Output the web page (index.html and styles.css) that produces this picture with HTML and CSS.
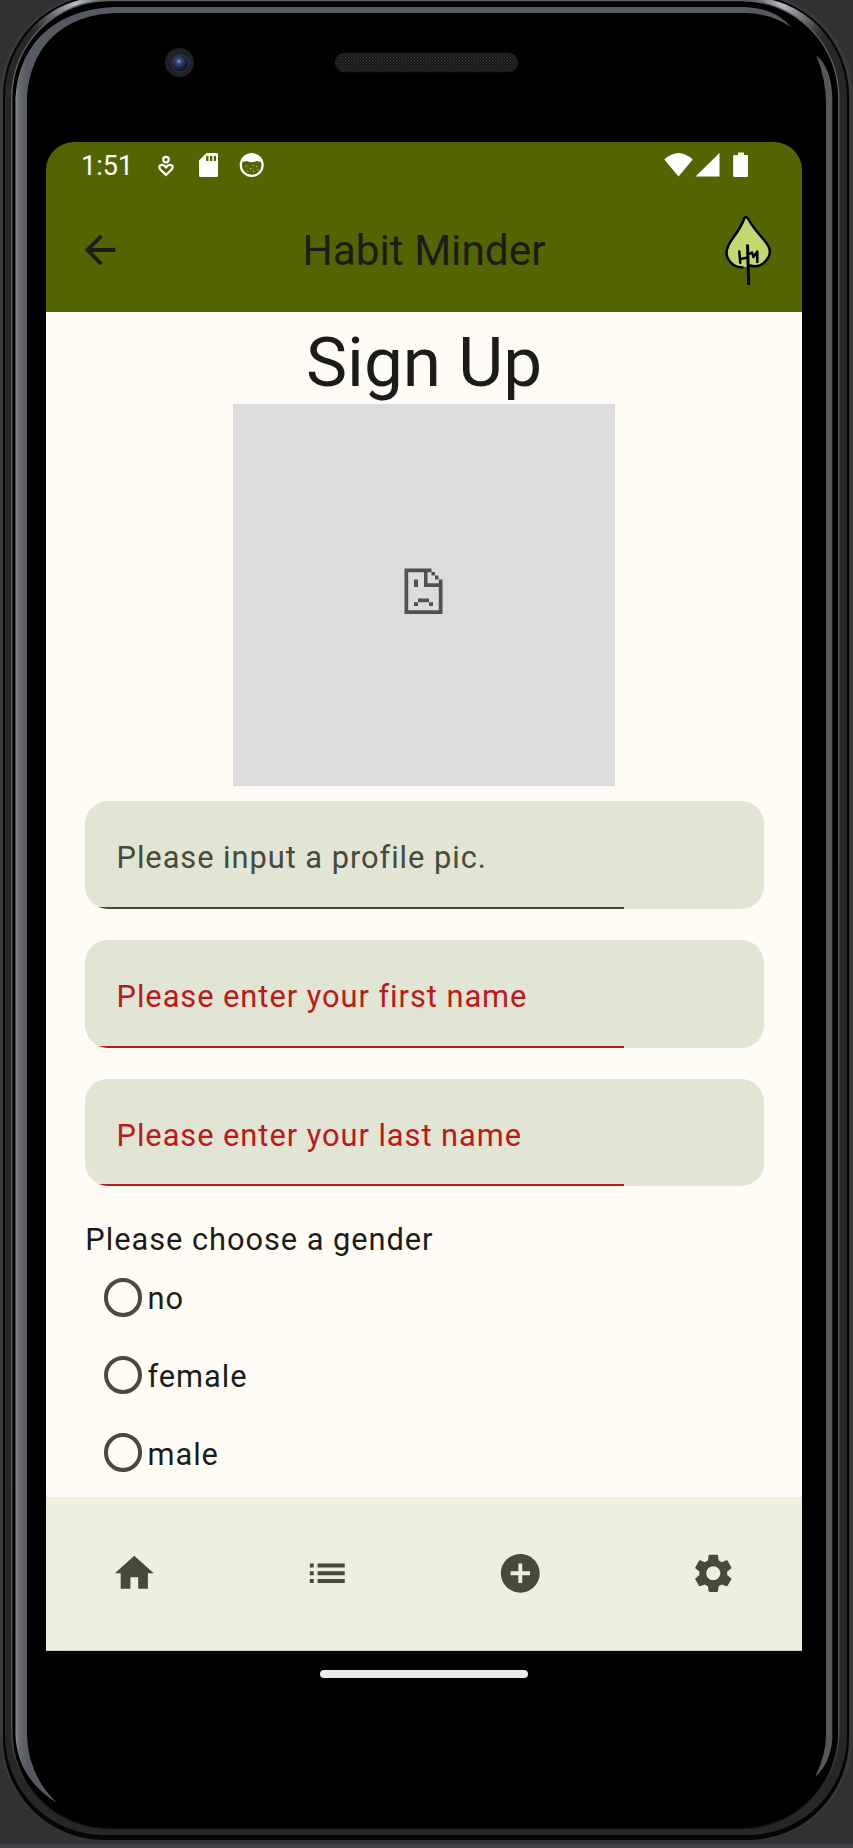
FILE: index.html
```html
<!DOCTYPE html>
<html lang="en">
<head>
<meta charset="utf-8">
<title>Habit Minder</title>
<link rel="stylesheet" href="styles.css">
</head>
<body>
<div class="stage">
  <svg class="device" viewBox="0 0 853 1848" aria-hidden="true">
    <defs>
      <linearGradient id="rail" gradientUnits="userSpaceOnUse" x1="15.5" x2="27" y1="0" y2="0"><stop offset="0" stop-color="#8b8d93"/><stop offset=".3" stop-color="#686b72"/><stop offset="1" stop-color="#565a62"/></linearGradient>
      <linearGradient id="ring" x1="0" y1="0" x2="0" y2="1"><stop offset="0" stop-color="#626365"/><stop offset=".94" stop-color="#5a5b5d"/><stop offset=".985" stop-color="#1c1c1c"/><stop offset="1" stop-color="#111"/></linearGradient>
      <radialGradient id="glintL" gradientUnits="userSpaceOnUse" cx="76" cy="4" r="58"><stop offset="0" stop-color="#b8bcc1"/><stop offset=".5" stop-color="#62656a"/><stop offset="1" stop-color="#333" stop-opacity="0"/></radialGradient>
      <radialGradient id="glintR" gradientUnits="userSpaceOnUse" cx="783" cy="4" r="58"><stop offset="0" stop-color="#b8bcc1"/><stop offset=".5" stop-color="#62656a"/><stop offset="1" stop-color="#333" stop-opacity="0"/></radialGradient>
      <radialGradient id="lens" cx=".42" cy=".38" r=".6"><stop offset="0" stop-color="#8fa5d8"/><stop offset=".25" stop-color="#35477f"/><stop offset=".7" stop-color="#18203f"/><stop offset="1" stop-color="#10131c"/></radialGradient>
      <pattern id="mesh" width="3" height="3" patternUnits="userSpaceOnUse"><rect width="3" height="3" fill="#171918"/><path d="M0 0h1v1H0zM1.500 1.500h1v1H1.500z" fill="#3c3f3e"/></pattern>
    </defs>
    <rect x="0" y="-7" width="853" height="1847" rx="103" fill="#3b3839"/>
    <rect x="3" y="-5" width="846" height="1845" rx="101" fill="#050505"/>
    <rect x="5" y="-3" width="842" height="1838" rx="99" fill="#272727"/>
    <path d="M5 110V96A99 99 0 0 1 104-3H130V1H110A98 94 0 0 0 12 95V110z" fill="url(#glintL)"/>
    <path d="M847 110V96A99 99 0 0 0 748-3H722V1H741A98 94 0 0 1 839 95V110z" fill="url(#glintR)"/>
    <rect x="11.8" y=".5" width="827" height="1828" rx="97" fill="#000" stroke="url(#ring)" stroke-width="1.3"/>
    <path d="M15.500 1735V105C15.500 45 55 7 120 7H745Q775 8 791 27Q770 13 745 13H120C62 13 27 48 27 105V1735Q28 1775 57 1803Q17 1778 15.500 1735z" fill="url(#rail)"/>
    <path d="M816 55Q832 68 832.3 100V1740Q830 1764 815 1777Q826 1755 826 1735V105Q826 78 816 55z" fill="#57585e"/>
    <circle cx="179.5" cy="62.5" r="14.5" fill="#202122"/>
    <circle cx="180.3" cy="63.5" r="8.6" fill="url(#lens)" stroke="#353b49" stroke-width="1"/>
    <rect x="335.5" y="53.5" width="182" height="18" rx="9" fill="url(#mesh)" stroke="#1c1d1d" stroke-width="1.5"/>
  </svg>

  <main class="screen">
    <header class="top">
      <div class="status">
        <span class="clock">1:51</span>
        <svg class="s-heart" viewBox="157 150 18 28"><g fill="none" stroke="#fff" stroke-width="2.200"><circle cx="166" cy="158.600" r="2.800"/><path d="M166 174L160.400 168.500Q158.300 165.800 160.400 164.200Q163.500 162.700 166 166.300Q168.500 162.700 171.600 164.200Q173.700 165.800 171.600 168.500z"/></g></svg>
        <svg class="s-card" viewBox="199 153 19 24"><path fill="#fff" fill-rule="evenodd" d="M206.500 153H216.500Q218 153 218 154.500V175.500Q218 177 216.500 177H200.500Q199 177 199 175.500V160.500zM206.200 156V161H208.500V156zM210 156V161H212.300V156zM213.800 156V161H216V156z"/></svg>
        <svg class="s-face" viewBox="239 152 26 26"><circle cx="251.700" cy="165" r="10.900" fill="#536500" stroke="#fff" stroke-width="2.200"/><path d="M242.500 162L243.500 157.500L247 155H256L260 157.500L261 162L256.800 161Q251.800 163.500 246.800 161z" fill="#fff"/><path d="M245.500 166h1.300M250 168.500h1.300M256 166.500h1.300M253 171.500h1.300M247 171h1.300M257.500 170h1.300M252.500 165.500h1.300" stroke="#c3cc96" stroke-width="1.200"/></svg>
        <svg class="s-right" viewBox="664 152 86 26"><path fill="#fff" d="M664.300 159.500Q678.500 146.500 692.700 159.500L678.500 176.500zM695.500 176.500L719.500 153V176.500zM738 152.500H744V155H746.700Q748 155 748 156.300V175.700Q748 177 746.700 177H734.500Q733.200 177 733.200 175.700V156.300Q733.200 155 734.500 155H738z"/></svg>
      </div>
      <div class="appbar">
        <svg class="back" viewBox="0 0 24 24"><path fill="#1b1c17" d="M20 11H7.830l5.590-5.590L12 4l-8 8 8 8 1.410-1.410L7.830 13H20z"/></svg>
        <h1 class="app-title">Habit Minder</h1>
        <svg class="leaf" viewBox="722 212 52 76"><path d="M745.500 217C742 225 739 230 733 238C727 246 725 252 727.500 257.500C731 264 737 267 746 267C757 267 764 264 768 258C772 251 769 246 764 240C757 232 752 226 748.500 219.500Q746.500 215.500 745.500 217z" fill="#c1d971"/><g fill="none" stroke="#000" stroke-width="2.500" stroke-linecap="round" stroke-linejoin="round"><path d="M742.500 267.500C735 267.500 730 263 727.500 257.500C725 252 727 246 733 238C739 230 742 225 744.500 218Q746 215.500 748.500 219.500C752 226 757 232 764 240C769 246 772 251 768 258C763 266 757 267.500 750 265.500"/><path d="M747.500 244.500L748.700 285" stroke-width="3" stroke-linecap="butt"/><path d="M739.300 251.500L740.300 263M740.500 259L748 257.500M749 254L752 252.500L753.500 257L757.300 251.500L757.300 262"/></g></svg>
      </div>
    </header>

    <section class="content">
      <h2 class="heading">Sign Up</h2>
      <div class="photo">
        <svg class="broken" viewBox="0 0 39 47"><path fill="#dcdcdc" d="M1 1H27L38 12V46H1z"/><path fill="#515151" fill-rule="evenodd" d="M.500 .500H27.500V4H31V7.500H34.500V11.500H38.500V46H.500zM4.200 4.200V42.300H34.800V19H20V4.200zM23.500 4.200V15.300H34.800V11.500H31V7.500H27.500V4.200z"/><path fill="#515151" d="M10 11.500h4v7.500h-4zM14 30.500h11v3.800H14zM10 34.300h4v3.800h-4zM25 34.300h4v3.800h-4z"/></svg>
      </div>
      <div class="fields">
        <div class="field">Please input a profile pic.</div>
        <div class="field error">Please enter your first name</div>
        <div class="field error">Please enter your last name</div>
      </div>
      <div class="gender">
        <p class="legend">Please choose a gender</p>
        <label class="option"><i class="radio"></i><span>no</span></label>
        <label class="option"><i class="radio"></i><span>female</span></label>
        <label class="option"><i class="radio"></i><span>male</span></label>
      </div>
    </section>

    <nav class="tabs">
      <svg viewBox="0 0 24 24"><path d="M10 20v-6h4v6h5v-8h3L12 3 2 12h3v8z"/></svg>
      <svg viewBox="0 0 24 24"><path d="M3 13h2v-2H3v2zm0 4h2v-2H3v2zm0-8h2V7H3v2zm4 4h14v-2H7v2zm0 4h14v-2H7v2zM7 7v2h14V7H7z"/></svg>
      <svg viewBox="0 0 24 24"><path d="M12 2C6.480 2 2 6.480 2 12s4.480 10 10 10 10-4.480 10-10S17.520 2 12 2zm5 11h-4v4h-2v-4H7v-2h4V7h2v4h4v2z"/></svg>
      <svg viewBox="0 0 24 24"><path d="M19.140 12.940c.04-.3.06-.61.06-.94 0-.32-.02-.64-.07-.94l2.030-1.580c.18-.14.23-.41.12-.61l-1.920-3.320c-.12-.22-.37-.29-.59-.22l-2.390.96c-.5-.38-1.030-.7-1.620-.94l-.36-2.540c-.04-.24-.24-.41-.48-.41h-3.840c-.24 0-.43.17-.47.41l-.36 2.540c-.59.24-1.130.57-1.620.94l-2.390-.96c-.22-.08-.47 0-.59.22L2.740 8.870c-.12.21-.08.47.12.61l2.030 1.580c-.05.3-.09.63-.09.94s.02.64.07.94l-2.030 1.580c-.18.14-.23.41-.12.61l1.920 3.320c.12.22.37.29.59.22l2.390-.96c.5.38 1.030.7 1.620.94l.36 2.540c.05.24.24.41.48.41h3.840c.24 0 .44-.17.47-.41l.36-2.540c.59-.24 1.130-.56 1.620-.94l2.390.96c.22.08.47 0 .59-.22l1.920-3.320c.12-.22.07-.47-.12-.61l-2.010-1.580zM12 15.600c-1.980 0-3.600-1.620-3.600-3.600s1.620-3.600 3.600-3.600 3.600 1.620 3.600 3.600-1.620 3.600-3.600 3.600z"/></svg>
    </nav>
  </main>
  <div class="handle"></div>
</div>
</body>
</html>
```

FILE: styles.css
```css
* { box-sizing: border-box; }
body { margin: 0; background: #2f3133; font-family: Roboto, "Noto Sans", sans-serif; color: #1b1c17; }
svg { display: block; flex: none; }
h1, h2, p { margin: 0; font-weight: 400; }

.stage { position: relative; width: 853px; height: 1848px; overflow: hidden; padding: 142px 51px 0 46px; border-bottom: 4px solid #3c3f43; }
.device { position: absolute; left: 0; top: 0; width: 853px; height: 1848px; }

.screen { position: relative; display: flex; flex-direction: column; height: 1509px; }

.top { height: 169.500px; flex: none; background: #536500; border-radius: 28px 28px 0 0; }
.status { display: flex; align-items: center; height: 46px; padding: 0 52px 0 35px; color: #fff; }
.clock { width: 76px; padding-top: 2px; font-size: 27px; line-height: 46px; }
.s-heart { width: 18px; height: 28px; margin-right: 24px; }
.s-card { width: 19px; height: 24px; margin-right: 21px; }
.s-face { width: 26px; height: 26px; }
.s-right { width: 86px; height: 26px; margin-left: auto; }
.appbar { display: flex; align-items: center; justify-content: space-between; height: 123.500px; padding: 0 28px 0 31px; }
.back { width: 46px; height: 46px; }
.app-title { padding: 2px 0 0 3px; font-size: 42.350px; line-height: 54px; }
.leaf { width: 52px; height: 76px; }

.content { flex: 1; min-height: 0; padding-top: 8.500px; background: #fffcf5; overflow: hidden; }
.heading { height: 84px; font-size: 69.300px; line-height: 86px; text-align: center; }
.photo { display: flex; align-items: center; justify-content: center; width: 381.500px; height: 382px; margin: 0 auto; padding: 0 2px 8px 0; background: #dcdcdc; }
.broken { width: 39px; height: 47px; }
.fields { display: flex; flex-direction: column; gap: 31px; padding: 15px 38.500px 0; }
.field { height: 107.800px; padding: 5px 32px 0; border-radius: 23px; background: linear-gradient(#474a3c, #474a3c) 0 100% / 539px 2px no-repeat #e2e4d4; color: #474a3c; font-size: 30.800px; line-height: 103px; letter-spacing: .960px; }
.field.error { background-image: linear-gradient(#ba1a1a, #ba1a1a); color: #ba1a1a; }
.gender { padding: 30.300px 39.300px 0; font-size: 30.800px; letter-spacing: .960px; }
.legend { height: 42px; line-height: 46.200px; }
.option { display: flex; align-items: center; height: 77.600px; padding-left: 18.700px; }
.option span { padding: 3px 0 0 5px; }
.radio { width: 38.500px; height: 38.500px; border: 4px solid #474a3c; border-radius: 50%; }

.tabs { display: grid; grid-template-columns: repeat(4, 1fr); gap: 15.400px; flex: none; align-items: center; justify-items: center; height: 154px; background: #eeefdf; border-bottom: 1px solid #d0d1c2; }
.tabs svg { width: 46.600px; height: 46.600px; fill: #474a3c; }
.handle { position: relative; width: 208px; height: 8px; margin: 19px auto 0; border-radius: 4px; background: #ebebeb; }
```
